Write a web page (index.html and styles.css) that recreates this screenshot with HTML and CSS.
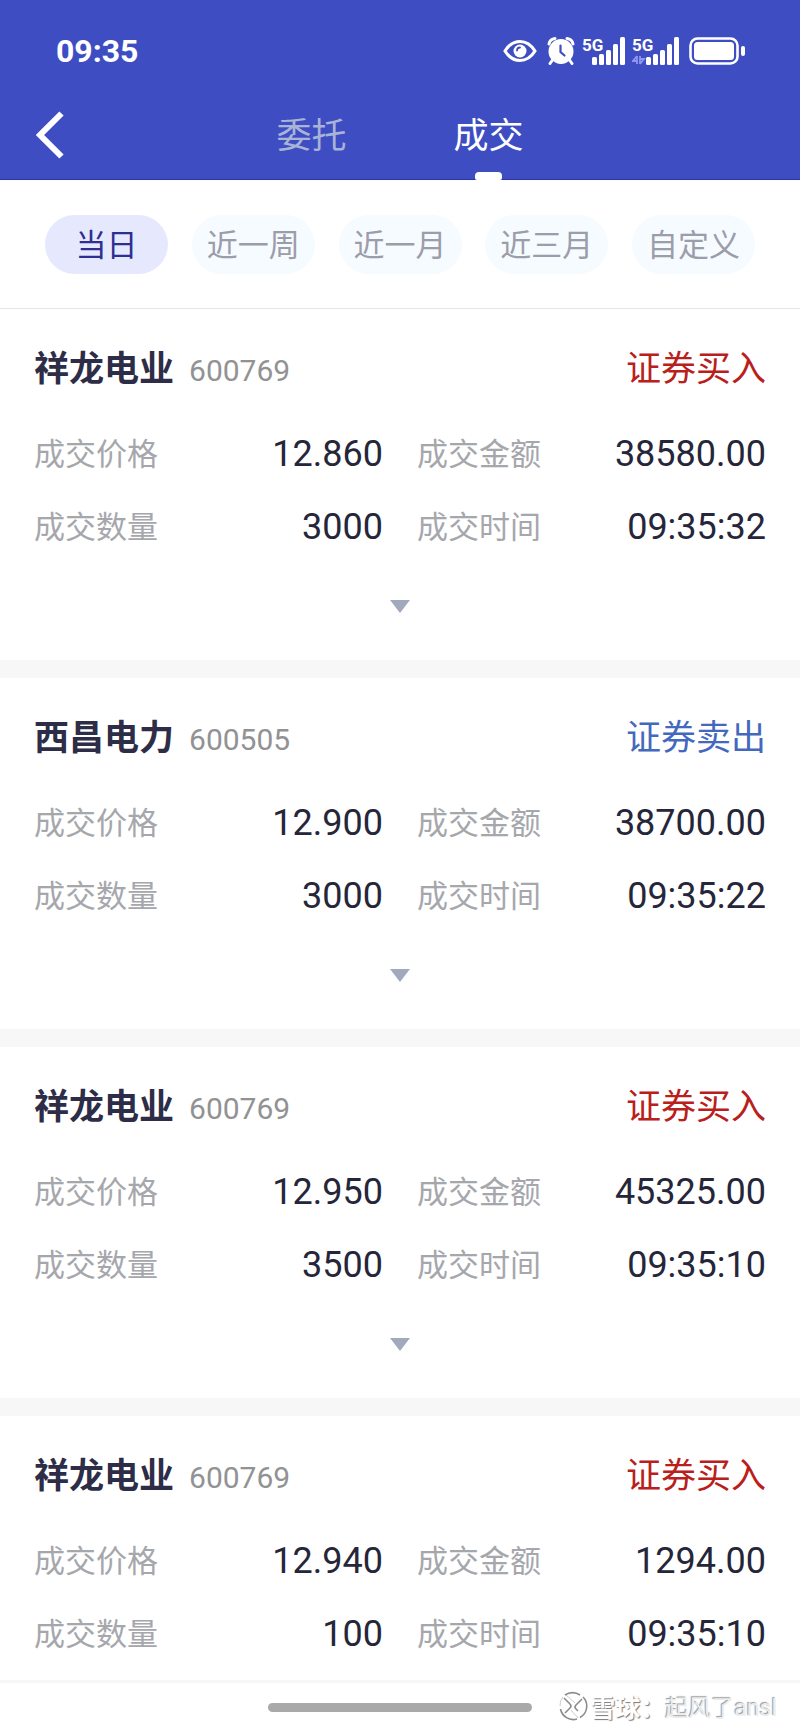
FILE: index.html
```html
<!DOCTYPE html>
<html lang="zh-CN">
<head>
<meta charset="utf-8">
<meta name="viewport" content="width=device-width, initial-scale=1">
<title>成交</title>
<link rel="stylesheet" href="styles.css">
</head>
<body>
<div class="app">
  <header class="header">
    <div class="status">
      <time class="clock">09:35</time>
      <div class="status-icons">
        <svg class="eye" width="34" height="28" viewBox="0 0 34 28" aria-hidden="true">
          <path d="M2 14Q8 4.500 17 4.500T32 14Q26 23.500 17 23.500T2 14Z" fill="none" stroke="#fff" stroke-width="3.200" stroke-linejoin="round"/>
          <circle cx="17" cy="14" r="6.500" fill="#fff"/>
          <path d="M14 13.500a3 3 0 0 1 3-3" fill="none" stroke="#3e4ec2" stroke-width="1.800" stroke-linecap="round"/>
        </svg>
        <svg class="alarm" width="28" height="28" viewBox="0 0 28 28" aria-hidden="true">
          <circle cx="14" cy="14.500" r="12.500" fill="#fff"/>
          <path d="M2 7Q3 2 8 1.500M26 7Q25 2 20 1.500" fill="none" stroke="#fff" stroke-width="3" stroke-linecap="round"/>
          <path d="M5.500 23L3 26.500M22.500 23L25 26.500" stroke="#fff" stroke-width="3" stroke-linecap="round"/>
          <path d="M13.500 8.500V15l4 3.500" fill="none" stroke="#3e4ec2" stroke-width="2.200" stroke-linecap="round"/>
        </svg>
        <svg class="signal" width="43" height="40" viewBox="0 -6 43 40" aria-hidden="true">
          <text class="net" x="0" y="14">5G</text>
          <g fill="#fff"><rect x="10" y="20" width="5" height="8" rx="1.500"/><rect x="17" y="17" width="5" height="11" rx="1.500"/><rect x="24" y="13" width="5" height="15" rx="1.500"/><rect x="31" y="7" width="5" height="21" rx="1.500"/><rect x="38" y="0" width="5" height="28" rx="1.500"/></g>
        </svg>
        <svg class="signal" width="47" height="40" viewBox="0 -6 47 40" aria-hidden="true">
          <text class="net" x="0" y="14">5G</text>
          <path d="M5 19v8M5 19l-4 5h4M8 27v-8M8 27l4-5H8" fill="none" stroke="#8f97f0" stroke-width="1.800"/>
          <g fill="#fff"><rect x="14" y="20" width="5" height="8" rx="1.500"/><rect x="21" y="17" width="5" height="11" rx="1.500"/><rect x="28" y="13" width="5" height="15" rx="1.500"/><rect x="35" y="7" width="5" height="21" rx="1.500"/><rect x="42" y="0" width="5" height="28" rx="1.500"/></g>
        </svg>
        <svg class="battery" width="56" height="28" viewBox="0 0 56 28" aria-hidden="true">
          <rect x="1.500" y="1.500" width="47" height="25" rx="7" fill="none" stroke="#fff" stroke-width="2.600"/>
          <rect x="5" y="5" width="40" height="18" rx="3.500" fill="#fff"/>
          <rect x="52" y="9" width="4" height="10" rx="2" fill="#fff"/>
        </svg>
      </div>
    </div>
    <nav class="nav">
      <button class="back" type="button" aria-label="返回">
        <svg width="28" height="48" viewBox="0 0 28 48" aria-hidden="true"><path d="M25.500 2.500L4 24l21.500 21.500" fill="none" stroke="#fff" stroke-width="6"/></svg>
      </button>
      <div class="tabs">
        <a class="tab" href="#orders">委托</a>
        <a class="tab tab-active" href="#deals" aria-current="page">成交</a>
      </div>
    </nav>
  </header>

  <div class="filters">
    <button class="chip chip-active" type="button">当日</button>
    <button class="chip" type="button">近一周</button>
    <button class="chip" type="button">近一月</button>
    <button class="chip" type="button">近三月</button>
    <button class="chip" type="button">自定义</button>
  </div>

  <main class="list">
    <article class="deal">
      <div class="deal-head"><h2 class="name">祥龙电业</h2><span class="code">600769</span><span class="side buy">证券买入</span></div>
      <dl class="facts">
        <div class="fact"><dt>成交价格</dt><dd>12.860</dd></div>
        <div class="fact"><dt>成交金额</dt><dd>38580.00</dd></div>
        <div class="fact"><dt>成交数量</dt><dd>3000</dd></div>
        <div class="fact"><dt>成交时间</dt><dd>09:35:32</dd></div>
      </dl>
      <button class="expand" type="button" aria-label="展开"><svg width="20" height="13" viewBox="0 0 20 13" aria-hidden="true"><path d="M0 0h20L10 13z"/></svg></button>
    </article>
    <article class="deal">
      <div class="deal-head"><h2 class="name">西昌电力</h2><span class="code">600505</span><span class="side sell">证券卖出</span></div>
      <dl class="facts">
        <div class="fact"><dt>成交价格</dt><dd>12.900</dd></div>
        <div class="fact"><dt>成交金额</dt><dd>38700.00</dd></div>
        <div class="fact"><dt>成交数量</dt><dd>3000</dd></div>
        <div class="fact"><dt>成交时间</dt><dd>09:35:22</dd></div>
      </dl>
      <button class="expand" type="button" aria-label="展开"><svg width="20" height="13" viewBox="0 0 20 13" aria-hidden="true"><path d="M0 0h20L10 13z"/></svg></button>
    </article>
    <article class="deal">
      <div class="deal-head"><h2 class="name">祥龙电业</h2><span class="code">600769</span><span class="side buy">证券买入</span></div>
      <dl class="facts">
        <div class="fact"><dt>成交价格</dt><dd>12.950</dd></div>
        <div class="fact"><dt>成交金额</dt><dd>45325.00</dd></div>
        <div class="fact"><dt>成交数量</dt><dd>3500</dd></div>
        <div class="fact"><dt>成交时间</dt><dd>09:35:10</dd></div>
      </dl>
      <button class="expand" type="button" aria-label="展开"><svg width="20" height="13" viewBox="0 0 20 13" aria-hidden="true"><path d="M0 0h20L10 13z"/></svg></button>
    </article>
    <article class="deal">
      <div class="deal-head"><h2 class="name">祥龙电业</h2><span class="code">600769</span><span class="side buy">证券买入</span></div>
      <dl class="facts">
        <div class="fact"><dt>成交价格</dt><dd>12.940</dd></div>
        <div class="fact"><dt>成交金额</dt><dd>1294.00</dd></div>
        <div class="fact"><dt>成交数量</dt><dd>100</dd></div>
        <div class="fact"><dt>成交时间</dt><dd>09:35:10</dd></div>
      </dl>
    </article>
  </main>

  <footer class="footer">
    <div class="home-bar"></div>
    <div class="watermark">
      <svg width="30" height="30" viewBox="0 0 30 30" fill="none" aria-hidden="true">
        <path d="M7 4A13 13 0 0 1 22 4M25 6A13 13 0 0 1 22 26.500M19 28A13 13 0 0 1 2.500 18" stroke="#8c8c8c" stroke-width="1.600"/>
        <path d="M6 7l6 6q2 2 0 4l-5 5M24 8l-6 6q-2 2 0 4l2 2" stroke="#8c8c8c" stroke-width="1.600"/>
        <path d="M2 15A13 13 0 0 1 5 6M13 19l7 8M8 4l9 8" stroke="#ccc" stroke-width="1"/>
      </svg>
      <span class="brand">雪球：</span><span class="author">起风了ansl</span>
    </div>
  </footer>
</div>
</body>
</html>
```
FILE: styles.css
```css
* { box-sizing: border-box; }

body {
  margin: 0;
  background: #fff;
  font-family: Roboto, "Noto Sans CJK SC", sans-serif;
  color: #26263a;
}

button {
  margin: 0;
  padding: 0;
  border: 0;
  background: none;
  font: inherit;
  cursor: pointer;
}

svg { display: block; }

.app {
  display: flex;
  flex-direction: column;
  height: 100vh;
}

/* Header */
.header {
  flex: none;
  background: #3e4ec2;
  border-bottom: 1px solid #2c36a0;
  color: #fff;
}

.status {
  display: flex;
  align-items: center;
  justify-content: space-between;
  height: 90px;
  padding: 12px 55px 0 56px;
}

.clock { font-size: 32px; font-weight: 700; }

.status-icons { display: flex; align-items: center; }
.alarm { margin-left: 10px; }
.signal { margin-left: 7px; }
.battery { margin-left: 10px; }
.net { font: 700 17px Roboto, sans-serif; fill: #fff; }

.nav {
  display: grid;
  grid-template-columns: 1fr auto 1fr;
  align-items: center;
  height: 89px;
  padding: 0 36px;
}

.back { justify-self: start; }
.tabs { display: flex; gap: 107px; height: 100%; }

.tab {
  position: relative;
  display: flex;
  align-items: center;
  padding-bottom: 4px;
  font-size: 35px;
  color: #a9b3d6;
  text-decoration: none;
}

.tab-active { color: #fff; }

.tab-active::after {
  content: "";
  position: absolute;
  bottom: -1px;
  left: calc(50% - 14px);
  width: 27px;
  height: 8px;
  border-radius: 4px 4px 2px 2px;
  background: #fff;
}

/* Date filters */
.filters {
  flex: none;
  display: flex;
  justify-content: space-between;
  padding: 35px 45px 34px;
  border-bottom: 1px solid #e6e6e8;
}

.chip {
  width: 123px;
  height: 59px;
  padding-top: 3px;
  border-radius: 30px;
  background: #f6fbff;
  font-size: 31px;
  line-height: 56px;
  color: #9c9dab;
}

.chip-active { background: #e6e9fd; color: #2d2f93; }

/* Deals */
.list {
  flex: 1;
  min-height: 0;
  overflow-y: auto;
  scrollbar-width: none;
}

.deal { padding: 40px 34px 10px; }
.deal + .deal { border-top: 18px solid #f7f7f7; }

.deal-head {
  display: flex;
  align-items: baseline;
  height: 42px;
  margin-bottom: 26px;
  line-height: 42px;
}

.name { margin: 0; font-size: 35px; font-weight: 700; color: #2d2d48; }
.code { margin-left: 15px; font-size: 30px; color: #929294; }
.side { margin-left: auto; font-size: 35px; }
.buy { color: #b9201c; }
.sell { color: #4468bd; }

.facts {
  display: grid;
  grid-template-columns: 1fr 1fr;
  column-gap: 34px;
  margin: 0;
}

.fact {
  display: flex;
  align-items: center;
  justify-content: space-between;
  height: 73px;
}

.fact dt { padding-bottom: 4px; font-size: 31px; color: #a6a7ac; }
.fact dd { margin: 0; font-size: 36px; }

.expand {
  display: flex;
  align-items: center;
  justify-content: center;
  width: 100%;
  height: 87px;
  fill: #a1aabd;
}

/* Bottom bar */
.footer {
  position: relative;
  flex: none;
  display: flex;
  justify-content: center;
  padding: 20px 0;
  border-top: 3px solid #f7f7f7;
}

.home-bar {
  width: 33%;
  height: 9px;
  border-radius: 5px;
  background: #a9a9a9;
}

.watermark {
  position: absolute;
  right: 23px;
  top: 8px;
  display: flex;
  align-items: center;
  height: 30px;
  white-space: nowrap;
}

.brand {
  margin-left: 2px;
  font-size: 25px;
  font-weight: 700;
  color: #fff;
  text-shadow: 1px 1px 1px #777;
}

.author {
  font-size: 23px;
  color: #ececec;
  text-shadow: -1px -1px 1px #999;
}
```
